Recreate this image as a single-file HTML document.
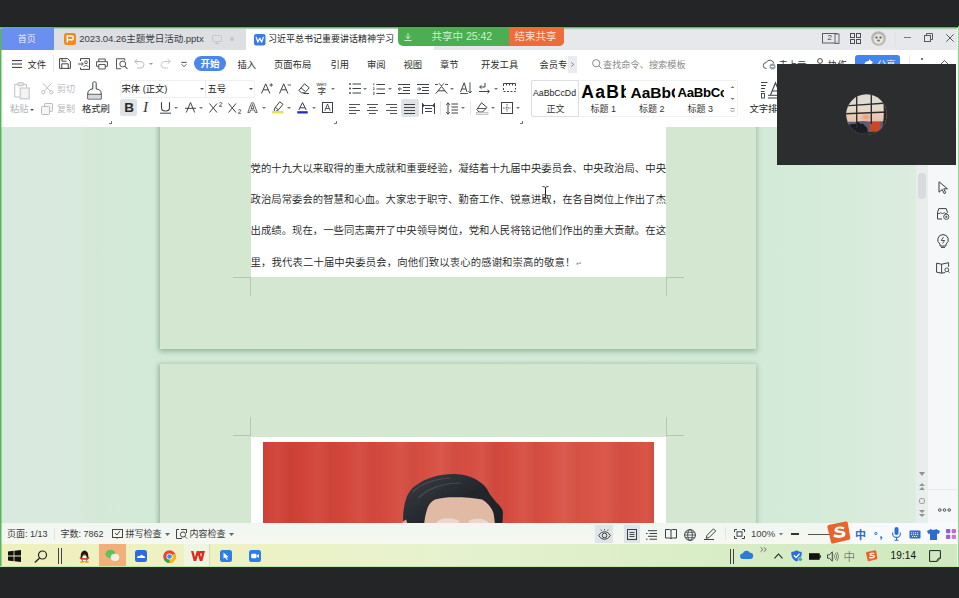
<!DOCTYPE html>
<html lang="zh-CN">
<head>
<meta charset="utf-8">
<title>WPS</title>
<style>
*{box-sizing:border-box;margin:0;padding:0}
html,body{width:959px;height:598px;overflow:hidden;background:#242527;}
body{position:relative;font-family:"Liberation Sans","Noto Sans CJK SC",sans-serif;font-size:9px;color:#333;-webkit-font-smoothing:antialiased;}
.abs{position:absolute}
.t{position:absolute;white-space:nowrap;line-height:1;}
svg{position:absolute;overflow:visible}
#win{position:absolute;left:0;top:25.500px;width:959px;height:541.500px;background:linear-gradient(180deg,#0e2c10 0,#0e2c10 1.300px,#7fa381 1.500px,#a9c9ad 3px,#58b45d 3.200px)}
#tabbar{position:absolute;left:1.500px;top:27.500px;width:956px;height:22.500px;background:linear-gradient(180deg,#9fc3a3 0,#d4e4d7 1.500px,#e6e8ec 2.500px);}
#menurow{position:absolute;left:2px;top:50px;width:955px;height:27px;background:#fff;}
#ribbon{position:absolute;left:2px;top:77px;width:955px;height:50px;background:#fff;}
#doc{position:absolute;left:2px;top:127px;width:955px;height:396px;background:linear-gradient(90deg,#d9e9df 0,#d8e9dd 78px,#d6e8d8 80px,#d3ead8 158px,#d2ead7 755px,#d6ebda 830px,#dcecdf 914px);overflow:hidden}
#status{position:absolute;left:2px;top:523px;width:955px;height:21px;background:linear-gradient(180deg,#f1f6f1 0,#f6f8f1 100%);font-size:9px;color:#3a3a3a}
#taskbar{position:absolute;left:2px;top:544px;width:955px;height:21.700px;background:linear-gradient(90deg,#eef0bd 0,#edf2c4 250px,#e6f2cf 450px,#d9edc6 700px,#cfe9c0 959px);}

#doc .page{position:absolute;background:#d4e7d0;box-shadow:0 2px 5px 1px rgba(80,120,90,.36),-2px 0 4px rgba(80,120,90,.18);}
#doc .line{position:absolute;left:248.5px;width:415.5px;height:12px;font-size:10.350px;line-height:12px;color:#222;font-weight:350;text-align:justify;text-align-last:justify;white-space:nowrap;letter-spacing:0}
.crop{position:absolute;background:#b4c4b6}
#side{position:absolute;left:928px;top:127px;width:29px;height:396px;background:#f5f7f9}
#vscroll{position:absolute;left:916px;top:165px;width:12px;height:358px;background:#e8eeeb}

#tabbar .t{font-size:9px;color:#333}
#menurow .t{font-size:9.300px;color:#2b2b2b;top:10.500px}
.dd{position:absolute;width:0;height:0;border-left:2px solid transparent;border-right:2px solid transparent;border-top:2.500px solid #777}
#share{position:absolute;left:398px;top:27px;width:165.500px;height:19px;border-radius:0 0 5px 5px;overflow:hidden;background:#4bae52}

#ribbon .t{font-size:9px;color:#2b2b2b}
#ribbon svg path,#ribbon svg rect,#ribbon svg circle{vector-effect:none}
.lnch{position:absolute;width:3px;height:3px;margin-top:1px;border-right:1px solid #777;border-bottom:1px solid #777}
.sep{position:absolute;width:1px;background:#e6e6e6}
</style>
</head>
<body>
<div id="win"></div>
<div id="tabbar">
 <div class="abs" style="left:0;top:.7px;width:52.500px;height:22px;background:#6b8ff0"></div>
 <span class="t" style="left:16.300px;top:7.500px;color:rgba(255,255,255,.9);font-size:9px">首页</span>
 <div class="abs" style="left:52.500px;top:1.500px;width:192px;height:21px;background:#dedfe3"></div>
 <svg style="left:62px;top:5.500px" width="12" height="12" viewBox="0 0 12 12"><rect width="12" height="12" rx="2.200" fill="#f08a24"/><path d="M3.300 9.500V3h4.200c2.300 0 2.300 3.800 0 3.800H4.200" fill="none" stroke="#fff" stroke-width="1.400"/></svg>
 <span class="t" style="left:77.800px;top:6.800px;font-size:9.600px;color:#3a3d45;letter-spacing:-.1px">2023.04.26主题党日活动.pptx</span>
 <svg style="left:210px;top:7px" width="10" height="9" viewBox="0 0 10 9"><rect x=".5" y=".5" width="9" height="6" rx=".8" fill="none" stroke="#c3c6cb" stroke-width="1"/><path d="M5 6.500v2M3 8.500h4" stroke="#c3c6cb"/></svg>
 <div class="abs" style="left:228.500px;top:9.500px;width:3.500px;height:3.500px;border-radius:2px;background:#c0c3c8"></div>
 <div class="abs" style="left:244.500px;top:1.500px;width:188px;height:21px;background:#fff"></div>
 <svg style="left:252px;top:6px" width="11.500" height="11.500" viewBox="0 0 12 12"><rect width="12" height="12" rx="2.200" fill="#3a7be8"/><path d="M2.300 3.500l1.700 5L6 4.500l2 4 1.700-5" fill="none" stroke="#fff" stroke-width="1.300" stroke-linejoin="round" stroke-linecap="round"/></svg>
 <span class="t" style="left:266.500px;top:7.700px;font-size:9px;color:#222">习近平总书记重要讲话精神学习</span>
 <svg style="left:820px;top:5px" width="18" height="11" viewBox="0 0 18 11"><rect x=".5" y=".5" width="14.500" height="9.500" fill="none" stroke="#5a5f66"/><rect x="13" y="1" width="4" height="9.500" fill="#e6e8ec" stroke="#5a5f66" stroke-width=".9"/><path d="M14.500 9h1" stroke="#5a5f66" stroke-width=".8"/></svg>
 <span class="t" style="left:826px;top:6.500px;font-size:8px;color:#444">2</span>
 <svg style="left:848.500px;top:5px" width="11" height="11" viewBox="0 0 11 11"><rect x=".5" y=".5" width="4" height="4" fill="none" stroke="#4a4f56"/><rect x="6.500" y=".5" width="4" height="4" fill="none" stroke="#4a4f56"/><rect x=".5" y="6.500" width="4" height="4" fill="none" stroke="#4a4f56"/><rect x="6.500" y="6.500" width="4" height="4" fill="none" stroke="#4a4f56"/></svg>
 <svg style="left:869.500px;top:3px" width="15" height="15" viewBox="0 0 15 15"><circle cx="7.500" cy="7.500" r="7.300" fill="#b9b6b0"/><circle cx="7.500" cy="8" r="5" fill="#e6e3dd"/><circle cx="5.500" cy="6.500" r="1.100" fill="#555"/><circle cx="9.500" cy="6.500" r="1.100" fill="#555"/><ellipse cx="7.500" cy="9.500" rx="1.500" ry="1" fill="#777"/></svg>
 <div class="abs" style="left:893px;top:4px;width:1px;height:15px;background:#dfe1e5"></div>
 <div class="abs" style="left:902px;top:9.500px;width:7px;height:1px;background:#777"></div>
 <svg style="left:922px;top:5.500px" width="9" height="9" viewBox="0 0 9 9"><path d="M2.500 2.500V.5h6v6h-2" fill="none" stroke="#5a5a5a" stroke-width="1"/><rect x=".5" y="2.500" width="6" height="6" fill="none" stroke="#5a5a5a"/></svg>
 <svg style="left:944px;top:6.500px" width="8" height="8" viewBox="0 0 8 8"><path d="M.3.300l7.400 7.400M7.700.3L.3 7.700" stroke="#5a5a5a" stroke-width="1"/></svg>
</div>
<div id="share">
 <div class="abs" style="left:110.500px;top:0;width:55px;height:19px;background:#ee6b3b"></div>
 <svg style="left:6px;top:6px" width="8" height="8" viewBox="0 0 8 8"><path d="M4 0v5.500M1.500 3.300L4 5.700l2.500-2.400M.3 7.500h7.400" fill="none" stroke="#d5f5d5" stroke-width=".9"/></svg>
 <span class="t" style="left:33.500px;top:4.300px;font-size:10.500px;color:#c9f3c9">共享中 25:42</span>
 <span class="t" style="left:116.500px;top:4.300px;font-size:10.500px;color:#fde3d6">结束共享</span>
</div>
<div id="menurow">
 <svg style="left:10px;top:9.500px" width="10" height="8" viewBox="0 0 10 8"><path d="M0 .6h10M0 4h10M0 7.400h10" stroke="#333" stroke-width="1"/></svg>
 <span class="t" style="left:25.500px">文件</span>
 <div class="abs" style="left:50.500px;top:5px;width:1px;height:17px;background:#e9e9e9"></div>
 <svg style="left:57px;top:8px" width="12" height="11" viewBox="0 0 12 11"><path d="M.6.600h8l2.800 2.800v7H.6zM2.800 10.400V5.800h6.400v4.600M3 .6v2.600h4.500" fill="none" stroke="#444" stroke-width="1"/></svg>
 <svg style="left:76px;top:7.500px" width="12" height="12" viewBox="0 0 12 12"><path d="M2.500 3V.6h9v10.800h-9V9.500" fill="none" stroke="#444" stroke-width="1"/><path d="M0 6h5M3.500 4.200L5.300 6 3.500 7.800" fill="none" stroke="#444" stroke-width=".9"/><circle cx="8" cy="4.300" r="1.400" fill="none" stroke="#444" stroke-width=".9"/><path d="M6 9c0-2 4-2 4 0" fill="none" stroke="#444" stroke-width=".9"/></svg>
 <svg style="left:94px;top:7.500px" width="12" height="12" viewBox="0 0 13 12"><path d="M3 3.500V.6h7v2.900M3 8.500H.6v-5h11.800v5H10M3 6.500h7v4.900H3z" fill="none" stroke="#444" stroke-width="1"/></svg>
 <svg style="left:113.700px;top:7.500px" width="12" height="11.500" viewBox="0 0 13 12"><path d="M9.500 2.500V.6H.6v10.800h5" fill="none" stroke="#444" stroke-width="1"/><circle cx="7.300" cy="6.300" r="3.200" fill="none" stroke="#444" stroke-width="1"/><path d="M9.600 8.700l2.800 2.800" stroke="#444" stroke-width="1.100"/></svg>
 <svg style="left:132px;top:8px" width="11" height="11" viewBox="0 0 11 11"><path d="M3.500.8L.8 3.500l2.700 2.700M1 3.500h5.500c4.500 0 4.500 6.500 0 6.500H3" fill="none" stroke="#b5b8bc" stroke-width="1"/></svg>
 <div class="dd" style="left:146.500px;top:12.500px;border-top-color:#999"></div>
 <svg style="left:158px;top:8px" width="11" height="11" viewBox="0 0 11 11"><path d="M7.500.8l2.700 2.700-2.700 2.700M10 3.500H4.500C0 3.500 0 10 4.500 10H8" fill="none" stroke="#c5c8cc" stroke-width="1"/></svg>
 <svg style="left:178.800px;top:11.500px" width="6" height="5.500" viewBox="0 0 7 7"><path d="M0 .5h7M.5 3l3 3 3-3" fill="none" stroke="#444" stroke-width="1.200"/></svg>
 <div class="abs" style="left:191.500px;top:6px;width:32.500px;height:15px;border-radius:7.500px;background:#4b87e8"></div>
 <span class="t" style="left:198.500px;top:9.300px;color:#fff;font-weight:bold;font-size:9.500px">开始</span>
 <span class="t" style="left:235.500px">插入</span>
 <span class="t" style="left:272px">页面布局</span>
 <span class="t" style="left:328.500px">引用</span>
 <span class="t" style="left:365px">审阅</span>
 <span class="t" style="left:401.500px">视图</span>
 <span class="t" style="left:438px">章节</span>
 <span class="t" style="left:479px">开发工具</span>
 <span class="t" style="left:537.500px">会员专</span>
 <div class="abs" style="left:566px;top:5.500px;width:9px;height:17px;background:#e9ebee"></div>
 <svg style="left:569px;top:11.500px" width="3.200" height="5" viewBox="0 0 4 6"><path d="M.5.500L3.300 3 .5 5.500" fill="none" stroke="#555" stroke-width=".9"/></svg>
 <svg style="left:589.500px;top:9px" width="10" height="10" viewBox="0 0 10 10"><circle cx="4.200" cy="4.200" r="3.600" fill="none" stroke="#888" stroke-width="1"/><path d="M6.800 6.800L9.600 9.600" stroke="#888" stroke-width="1"/></svg>
 <span class="t" style="left:601px;color:#8a8a8a;font-size:9.200px">查找命令、搜索模板</span>
 <svg style="left:761px;top:9px" width="13" height="11" viewBox="0 0 13 11"><path d="M3.500 9.500a3 3 0 0 1-.3-6A4 4 0 0 1 10.800 4.500" fill="none" stroke="#555" stroke-width="1"/><circle cx="9.500" cy="7.500" r="3" fill="#9aa0a8"/><path d="M8 7.500h3" stroke="#fff" stroke-width="1"/></svg>
 <span class="t" style="left:776.500px;color:#333">未上云</span>
 <svg style="left:814px;top:8px" width="9" height="11" viewBox="0 0 9 11"><circle cx="4" cy="3" r="2.400" fill="none" stroke="#444"/><path d="M.5 10.500c0-5 7-5 7 0" fill="none" stroke="#444"/></svg>
 <span class="t" style="left:826px;color:#333">协作</span>
 <div class="abs" style="left:853px;top:4.700px;width:45px;height:17px;border-radius:3px;background:#4285f0"></div>
 <svg style="left:862px;top:9px" width="9" height="8" viewBox="0 0 9 8"><path d="M5 0l4 3.500L5 7V5C2.500 5 1 6 0 8c0-4 2-6 5-6z" fill="#fff"/></svg>
 <span class="t" style="left:875px;color:#fff">分享</span>
 <div class="abs" style="left:907px;top:5px;width:1px;height:17px;background:#e9e9e9"></div>
 <div class="abs" style="left:918.500px;top:8px;width:2px;height:2px;border-radius:1px;background:#444"></div>
 <svg style="left:938px;top:10px" width="9" height="5" viewBox="0 0 9 5"><path d="M.5 4.500l4-4 4 4" fill="none" stroke="#555"/></svg>
</div>
<div id="ribbon">
 <svg style="left:11.500px;top:4.500px" width="16" height="17.500" viewBox="0 0 17 19"><path d="M4 2.500H.6v13.800H6M10 2.500h3.400V6" fill="none" stroke="#b9bcc0" stroke-width="1"/><rect x="4" y=".8" width="6" height="3.200" rx=".6" fill="#e9eaec" stroke="#b9bcc0"/><rect x="6.500" y="6.500" width="9.800" height="11.800" fill="#f2f3f4" stroke="#b9bcc0"/></svg>
 <span class="t" style="left:8px;top:28.300px;color:#b3b6ba;font-size:9.300px">粘贴</span>
 <div class="dd" style="left:27.500px;top:31.500px;border-top-color:#555"></div>
 <svg style="left:39px;top:5.500px" width="12.500" height="11.500" viewBox="0 0 13 12"><path d="M2 .3l7.500 8M11 .3l-7.500 8" stroke="#b9bcc0" stroke-width="1"/><circle cx="2.300" cy="9.700" r="1.700" fill="none" stroke="#b9bcc0"/><circle cx="10.700" cy="9.700" r="1.700" fill="none" stroke="#b9bcc0"/></svg>
 <span class="t" style="left:55px;top:8.200px;color:#b9bcc0">剪切</span>
 <svg style="left:39.200px;top:25.500px" width="12" height="12" viewBox="0 0 12 12"><rect x="3.500" y=".5" width="8" height="8" rx=".8" fill="#f4f5f6" stroke="#b9bcc0"/><rect x=".5" y="3.500" width="8" height="8" rx=".8" fill="#f4f5f6" stroke="#b9bcc0"/></svg>
 <span class="t" style="left:55px;top:28.300px;color:#b9bcc0">复制</span>
 <svg style="left:85px;top:4px" width="15" height="19" viewBox="0 0 15 19"><path d="M5.800 8V2.300c0-2.200 3.400-2.200 3.400 0V8M5.800 8C3 8 1.200 9.500.8 12v6h13.400v-6c-.4-2.500-2.200-4-5-4M.8 13.300h13.400" fill="none" stroke="#3d4248" stroke-width="1"/><rect x="1.300" y="13.800" width="12.400" height="3.700" fill="#d5d8dc"/></svg>
 <span class="t" style="left:80px;top:28.300px;font-size:9.300px;color:#222">格式刷</span>
 <div class="lnch" style="left:107px;top:42.500px"></div>
 <div class="abs" style="left:117.500px;top:2.500px;width:135.500px;height:18px;border:1px solid #eef0f2;border-radius:2px;background:#fff"></div>
 <div class="abs" style="left:203px;top:3.500px;width:1px;height:16px;background:#e9eaec"></div>
 <span class="t" style="left:119.500px;top:7.800px;font-size:9.300px;color:#222">宋体 (正文)</span>
 <div class="dd" style="left:197.500px;top:11px;border-top-color:#555"></div>
 <span class="t" style="left:205.500px;top:7.800px;font-size:9.300px;color:#222">五号</span>
 <div class="dd" style="left:247px;top:11px;border-top-color:#555"></div>
 <div class="abs" style="left:117.500px;top:21.500px;width:17.500px;height:17.500px;border-radius:2px;background:#e0e3e6"></div>
 <span class="t" style="left:122.200px;top:23.800px;font-size:13.500px;font-weight:bold;color:#2a2a2a;font-family:'Liberation Sans',sans-serif">B</span>
 <span class="t" style="left:141px;top:22.300px;font-size:15.500px;font-style:italic;color:#3a3a3a;font-family:'Liberation Serif',serif">I</span>
 <svg style="left:157.500px;top:25px" width="11" height="12" viewBox="0 0 11 12"><path d="M1.500.3v5.400c0 4.400 8 4.400 8 0V.3" fill="none" stroke="#3d4248" stroke-width="1.100"/><path d="M0 11.200h11" stroke="#3d4248" stroke-width="1"/></svg>
 <div class="dd" style="left:172px;top:30px"></div>
 <svg style="left:183px;top:25px" width="11" height="11" viewBox="0 0 11 11"><path d="M1.300 10.500L5.500.5l4.200 10" fill="none" stroke="#3d4248" stroke-width="1"/><path d="M0 6.300h11" stroke="#3d4248" stroke-width="1"/></svg>
 <div class="dd" style="left:197px;top:30px"></div>
 <svg style="left:207px;top:25px" width="14" height="11" viewBox="0 0 14 11"><path d="M.5 1.500l7.500 9M8 1.500l-7.500 9" stroke="#3d4248" stroke-width="1"/><path d="M10.300 1.300c.5-1.200 2.700-1 2.500.3-.1.900-1.500 1.500-2.600 2.700h2.900" fill="none" stroke="#3d4248" stroke-width=".8"/></svg>
 <svg style="left:225.500px;top:25px" width="14" height="12" viewBox="0 0 14 12"><path d="M.5 1.500l7.500 9M8 1.500l-7.500 9" stroke="#3d4248" stroke-width="1"/><path d="M10.300 8.300c.5-1.200 2.700-1 2.500.3-.1.900-1.500 1.500-2.600 2.700h2.900" fill="none" stroke="#3d4248" stroke-width=".8"/></svg>
 <svg style="left:244.500px;top:25px" width="11" height="11" viewBox="0 0 11 11"><path d="M.8 10.500L4.500.8h2l3.700 9.700H8.300L7.400 8H3.600l-.9 2.500zM4.100 6.500h2.800L5.500 2.500z" fill="none" stroke="#3d4248" stroke-width=".8"/></svg>
 <div class="dd" style="left:259.500px;top:30px"></div>
 <svg style="left:269.500px;top:24px" width="13" height="13" viewBox="0 0 13 13"><path d="M7.800.8l3.200 2.500-4.500 5.500-3.200-2.500zM3.300 6.300L2 9.200l1.500 1.200 3-1.600" fill="none" stroke="#3d4248" stroke-width="1" stroke-linejoin="round"/><rect x="0" y="10" width="11.500" height="2.500" fill="#e6e64a"/></svg>
 <div class="dd" style="left:284.500px;top:30px"></div>
 <svg style="left:295px;top:24.500px" width="11" height="12" viewBox="0 0 11 12"><path d="M1.800 8L5.500.5 9.200 8M3 5.800h5" fill="none" stroke="#3d4248" stroke-width="1"/><rect x=".3" y="9.200" width="10.400" height="2.300" fill="#2727c8"/></svg>
 <div class="dd" style="left:309.500px;top:30px"></div>
 <svg style="left:320px;top:25px" width="11" height="11" viewBox="0 0 11 11"><rect x=".5" y=".5" width="10" height="10" fill="none" stroke="#3d4248"/><path d="M2.800 8.800L5.500 2l2.700 6.800M3.700 6.500h3.600" fill="none" stroke="#3d4248" stroke-width=".9"/></svg>
 <div class="lnch" style="left:332px;top:42.500px"></div>
 <svg style="left:259px;top:5.500px" width="12" height="11" viewBox="0 0 12 11"><path d="M.5 10.500L4.700.8l4.200 9.700M2.200 6.800h5" fill="none" stroke="#3d4248" stroke-width="1"/><path d="M8.500 2h3.500M10.200.3v3.500" stroke="#3d4248" stroke-width=".9"/></svg>
 <svg style="left:277px;top:5.500px" width="12" height="11" viewBox="0 0 12 11"><path d="M.5 10.500L4.700.8l4.200 9.700M2.200 6.800h5" fill="none" stroke="#3d4248" stroke-width="1"/><path d="M8.700 2H12" stroke="#3d4248" stroke-width=".9"/></svg>
 <svg style="left:296px;top:5.500px" width="12" height="11" viewBox="0 0 12 11"><path d="M6.500.8l4.700 4-4.400 5H3.500L.8 7.500zM3 4.800l4.300 3.700M5.500 10.500H11" fill="none" stroke="#3d4248" stroke-width="1" stroke-linejoin="round"/></svg>
 <span class="t" style="left:315.500px;top:9.500px;font-size:8.500px;color:#333">字</span>
 <span class="t" style="left:314.500px;top:4.500px;font-size:5.500px;color:#333;letter-spacing:-.1px">wén</span>
 <div class="dd" style="left:329px;top:11px"></div>
 <svg style="left:346.500px;top:6px" width="12" height="11" viewBox="0 0 12 11"><path d="M3.500 1h8.500M3.500 5.500h8.500M3.500 10h8.500" stroke="#3d4248" stroke-width="1"/><circle cx="1" cy="1" r=".9" fill="#3d4248"/><circle cx="1" cy="5.500" r=".9" fill="#3d4248"/><circle cx="1" cy="10" r=".9" fill="#3d4248"/></svg>
 <div class="dd" style="left:361px;top:11px"></div>
 <svg style="left:371px;top:5.500px" width="12" height="12" viewBox="0 0 12 12"><path d="M3.500 1.500h8.500M3.500 6h8.500M3.500 10.500h8.500" stroke="#3d4248" stroke-width="1"/><path d="M.8 0v2.500M.2 4.800c.8-.6 1.500 0 .8.800l-.9 1h1.300M.2 9.200c1.500-.5 1.500 1 .4 1.100 1.200.1 1.100 1.700-.5 1.200" fill="none" stroke="#3d4248" stroke-width=".7"/></svg>
 <div class="dd" style="left:386px;top:11px"></div>
 <svg style="left:396px;top:6.500px" width="12" height="10" viewBox="0 0 12 10"><path d="M0 .5h12M5 3.500h7M5 6.500h7M0 9.500h12" stroke="#3d4248" stroke-width="1"/><path d="M3.800 5H.5M2 3.300L.3 5 2 6.700" fill="none" stroke="#3d4248" stroke-width=".9"/></svg>
 <svg style="left:414.500px;top:6.500px" width="12" height="10" viewBox="0 0 12 10"><path d="M0 .5h12M5 3.500h7M5 6.500h7M0 9.500h12" stroke="#3d4248" stroke-width="1"/><path d="M.2 5h3.300M2 3.300L3.700 5 2 6.700" fill="none" stroke="#3d4248" stroke-width=".9"/></svg>
 <svg style="left:432.500px;top:5.500px" width="13" height="11" viewBox="0 0 13 11"><path d="M.8 10.500L6.500 3.500l5.700 7M3 7.800h7" fill="none" stroke="#3d4248" stroke-width="1"/><path d="M4 .3L6.500 3 9 .3M0 1.500h3M10 1.500h3" fill="none" stroke="#3d4248" stroke-width=".9"/></svg>
 <div class="dd" style="left:448px;top:11px"></div>
 <svg style="left:458px;top:5px" width="12" height="12" viewBox="0 0 12 12"><path d="M.5 10L4.200.8 7 10M1.800 7h4" fill="none" stroke="#3d4248" stroke-width="1"/><path d="M0 11.500h8" stroke="#3d4248" stroke-width=".9"/><path d="M10 .3v10.500M8.300 9L10 11l1.700-2" fill="none" stroke="#3d4248" stroke-width=".9"/></svg>
 <svg style="left:477px;top:5.500px" width="11" height="11" viewBox="0 0 11 11"><path d="M6 0v4H.8M2.500 2.300L.6 4l1.900 1.700M0 8.500h10.200M8.500 6.800l1.900 1.700-1.900 1.700" fill="none" stroke="#3d4248" stroke-width="1"/></svg>
 <div class="dd" style="left:491.500px;top:11px"></div>
 <svg style="left:501px;top:6px" width="13" height="9" viewBox="0 0 13 9"><path d="M.5 3V.5h12V3M3.500.5v2M6.500.5v2M9.500.5v2" fill="none" stroke="#3d4248" stroke-width="1"/><path d="M.5 5v3.500h12V5" fill="none" stroke="#3d4248" stroke-width="1" stroke-dasharray="2 1.500"/></svg>
 <svg style="left:346.500px;top:26.500px" width="11" height="10" viewBox="0 0 11 10"><path d="M0 .5h11M0 3.500h7M0 6.500h11M0 9.500h7" stroke="#555" stroke-width="1"/></svg>
 <svg style="left:365px;top:26.500px" width="11" height="10" viewBox="0 0 11 10"><path d="M0 .5h11M2 3.500h7M0 6.500h11M2 9.500h7" stroke="#555" stroke-width="1"/></svg>
 <svg style="left:383.500px;top:26.500px" width="11" height="10" viewBox="0 0 11 10"><path d="M0 .5h11M4 3.500h7M0 6.500h11M4 9.500h7" stroke="#555" stroke-width="1"/></svg>
 <div class="abs" style="left:398.500px;top:22px;width:18px;height:18px;border-radius:2px;background:#dfe2e7"></div>
 <svg style="left:402px;top:26.500px" width="11" height="10" viewBox="0 0 11 10"><path d="M0 .5h11M0 3.500h11M0 6.500h11M0 9.500h11" stroke="#444" stroke-width="1.100"/></svg>
 <svg style="left:419.500px;top:25.500px" width="13" height="11" viewBox="0 0 13 11"><path d="M.5 0v11M12.500 0v11M.5 2.500h12M3 5.500h7M3 8.500h7" fill="none" stroke="#3d4248" stroke-width="1"/><path d="M2 1l-1.500 1.500L2 4M11 1l1.500 1.500L11 4" fill="none" stroke="#3d4248" stroke-width=".8"/></svg>
 <div class="sep" style="left:438px;top:24px;height:14px"></div>
 <svg style="left:443.500px;top:25px" width="12" height="13" viewBox="0 0 12 13"><path d="M2 1v11M.3 2.800L2 .8l1.700 2M.3 10.200L2 12.200l1.700-2" fill="none" stroke="#3d4248" stroke-width="1"/><path d="M5.500 2h6.500M5.500 5h6.500M5.500 8h6.500M5.500 11h6.500" stroke="#3d4248" stroke-width="1"/></svg>
 <div class="dd" style="left:458.500px;top:30px"></div>
 <div class="sep" style="left:468px;top:24px;height:14px"></div>
 <svg style="left:474px;top:24.500px" width="13" height="13" viewBox="0 0 13 13"><path d="M5.500.8L11 5.500 6.500 10H3L.8 7.500z" fill="none" stroke="#3d4248" stroke-width="1" stroke-linejoin="round"/><path d="M1 6.500h9" stroke="#3d4248" stroke-width=".9"/><rect x=".5" y="10.500" width="11.500" height="2" fill="#eceef0" stroke="#aaa" stroke-width=".6"/></svg>
 <div class="dd" style="left:489px;top:30px"></div>
 <svg style="left:499px;top:25px" width="12" height="12" viewBox="0 0 12 12"><rect x=".5" y=".5" width="11" height="11" fill="none" stroke="#3d4248"/><path d="M6 2v8M2 6h8" stroke="#3d4248" stroke-width=".9" stroke-dasharray="1.500 1"/></svg>
 <div class="dd" style="left:514px;top:30px"></div>
 <div class="lnch" style="left:517.500px;top:42.500px"></div>
 <div class="abs" style="left:529px;top:2.700px;width:206.500px;height:37.500px;border:1px solid #f0f1f3;border-radius:2px"></div>
 <div class="abs" style="left:529px;top:2.700px;width:47.500px;height:37.500px;border:1px solid #dcdfe2;border-radius:2px"></div>
 <span class="t" style="left:531px;top:11.500px;font-size:8.700px;color:#222;font-family:'Liberation Sans',sans-serif;letter-spacing:0">AaBbCcDd</span>
 <span class="t" style="left:544.500px;top:27.500px;font-size:9px;color:#333">正文</span>
 <div class="abs" style="left:578px;top:4px;width:46px;height:22px;overflow:hidden"><span class="t" style="left:1.300px;top:3.100px;font-size:17.500px;font-weight:bold;color:#000;font-family:'Liberation Sans',sans-serif;letter-spacing:1.300px">AaBb</span></div>
 <span class="t" style="left:588.500px;top:27.500px;font-size:9px;color:#333">标题 1</span>
 <div class="abs" style="left:626.500px;top:4px;width:46px;height:22px;overflow:hidden"><span class="t" style="left:2px;top:3.900px;font-size:15.500px;font-weight:bold;color:#000;font-family:'Liberation Sans',sans-serif">AaBbC</span></div>
 <span class="t" style="left:637px;top:27.500px;font-size:9px;color:#333">标题 2</span>
 <div class="abs" style="left:674.500px;top:4px;width:47.500px;height:22px;overflow:hidden"><span class="t" style="left:1px;top:5.400px;font-size:13.200px;font-weight:bold;color:#000;letter-spacing:-.3px;font-family:'Liberation Sans',sans-serif">AaBbCc</span></div>
 <span class="t" style="left:685.500px;top:27.500px;font-size:9px;color:#333">标题 3</span>
 <svg style="left:727.500px;top:8px" width="5" height="28" viewBox="0 0 5 28"><path d="M.5 3L2.500 1l2 2z M.5 13L2.500 15l2-2z" fill="#777"/><path d="M.5 23.500h4M.5 25l2 2 2-2" fill="none" stroke="#777" stroke-width=".8"/></svg>
 <svg style="left:759px;top:4.500px" width="16" height="17" viewBox="0 0 16 17"><path d="M0 .5h6.500M0 3.500h5M0 6.500h4M0 9.500h3.500" stroke="#3d4248" stroke-width="1"/><rect x=".5" y="11.500" width="3" height="4.500" fill="none" stroke="#3d4248" stroke-width=".9"/><path d="M9.500 13L14.500 .8 19.500 13M11.300 9h6.400" fill="none" stroke="#3d4248" stroke-width="1.100"/><path d="M7 13.300h12M7 16h12" stroke="#3d4248" stroke-width="1"/></svg>
 <span class="t" style="left:747.500px;top:27.500px;font-size:9.300px;color:#222">文字排版</span>
</div>
<div id="doc">
 <div class="page" style="left:158px;top:-40px;width:596px;height:262px"></div>
 <div class="page" style="left:158px;top:236.500px;width:596px;height:300px"></div>
 <div class="abs" style="left:248.5px;top:0;width:415.5px;height:150px;background:#fff"></div>
 <div class="line" style="top:36px">党的十九大以来取得的重大成就和重要经验，凝结着十九届中央委员会、中央政治局、中央</div>
 <div class="line" style="top:67.200px">政治局常委会的智慧和心血。大家忠于职守、勤奋工作、锐意进取，在各自岗位上作出了杰</div>
 <div class="line" style="top:98.400px">出成绩。现在，一些同志离开了中央领导岗位，党和人民将铭记他们作出的重大贡献。在这</div>
 <div class="line" style="top:129.600px;text-align-last:left;text-align:left;letter-spacing:.14px">里，我代表二十届中央委员会，向他们致以衷心的感谢和崇高的敬意！<span style="color:#888;font-size:7px">↵</span></div>
 <div class="crop" style="left:231px;top:150px;width:17.5px;height:1px"></div>
 <div class="crop" style="left:248px;top:150px;width:1px;height:18.5px"></div>
 <div class="crop" style="left:664px;top:150px;width:17.5px;height:1px"></div>
 <div class="crop" style="left:664px;top:150px;width:1px;height:18.5px"></div>
 <div class="crop" style="left:231px;top:308px;width:17.5px;height:1px"></div>
 <div class="crop" style="left:248px;top:290px;width:1px;height:18.5px"></div>
 <div class="crop" style="left:664px;top:308px;width:17.5px;height:1px"></div>
 <div class="crop" style="left:664px;top:290px;width:1px;height:18.5px"></div>
 <div class="abs" style="left:248.5px;top:310px;width:415.5px;height:100px;background:#fff"></div>
 <div class="abs" id="photo" style="left:260.500px;top:315px;width:391.500px;height:90px;background:repeating-linear-gradient(90deg,rgba(255,255,255,0) 0,rgba(255,255,255,.045) 14px,rgba(0,0,0,.025) 27px,rgba(255,255,255,0) 41px),linear-gradient(90deg,#cf4036 0,#d3463b 20%,#d85044 45%,#d54a3f 60%,#d95547 80%,#d64d41 100%);overflow:hidden">
  <svg style="left:0;top:0" width="392" height="90" viewBox="262.500 442 392 90"><defs><linearGradient id="hg" x1="0" y1="0" x2="1" y2="1"><stop offset="0" stop-color="#3a3e44"/><stop offset=".5" stop-color="#24272c"/><stop offset="1" stop-color="#1c1e22"/></linearGradient><filter id="bl" x="-10%" y="-10%" width="120%" height="120%"><feGaussianBlur stdDeviation=".7"/></filter></defs><g filter="url(#bl)"><path d="M403.500 534C402 520 402 508 406.600 496c3-6 6-9 9.400-11 5-4 10-6 15.600-7.800 7-2 15-3.200 21.900-3.200 6 0 12 1 17.200 3.200 5 2 9 4.500 12.500 7.800 3 3 4.500 6 6.300 9.400 2 2.500 4 5 6.200 7.800 3 3 5 5 6.300 7.800 1 4 0 9-.8 24z" fill="url(#hg)"/><path d="M423.500 534c-.5-8 .5-17 3.500-26 1.500-4 4-7 7.500-8.600 7-1.800 13-2.300 20.500-2.200 9 0 18 .6 26.700 2.200 5 3 9 7.500 10.900 12.600 1.500 5 2 14 2.400 22.400z" fill="#e0baa4"/><path d="M436 522c5-4.500 16-5 23-1l-2 6h-19zM468 521c6-3.500 15-3 20 1l-1 5h-18z" fill="#ecdcd2" opacity=".85"/><path d="M399.500 534c-.5-7 2-13 6-14.500 1.500 3 2 8 2 14.500z" fill="#d6ae96"/><path d="M412 492c8-8 22-13 38-14M418 498c8-9 24-15 42-15" fill="none" stroke="#5a6068" stroke-width="1.200" opacity=".55"/></g></svg>
 </div>
 <svg style="left:539.700px;top:58.500px" width="7" height="13" viewBox="0 0 7 13"><path d="M.5.600c1.500 0 2.500.3 3 1 .5-.7 1.500-1 3-1M.5 12.400c1.500 0 2.500-.3 3-1 .5.700 1.500 1 3 1M3.500 1.600v9.800" fill="none" stroke="#222" stroke-width="1"/></svg>
</div>
<div class="abs" style="left:1px;top:29px;width:1px;height:21px;background:#62a2a7"></div>
<div class="abs" style="left:1px;top:50px;width:1px;height:77px;background:#acdaae"></div>
<div class="abs" style="left:1px;top:127px;width:1px;height:396px;background:#98ce9e"></div>
<div class="abs" style="left:1px;top:523px;width:1px;height:21px;background:#a6d6a8"></div>
<div class="abs" style="left:1px;top:544px;width:1px;height:22px;background:#a3d28d"></div>
<div class="abs" style="left:956.500px;top:28px;width:1.200px;height:538px;background:#f2f7f2"></div>
<div class="abs" style="left:957.700px;top:26px;width:1.300px;height:541px;background:#93d296"></div>
<div class="abs" style="left:0;top:565.700px;width:959px;height:.9px;background:#bfe6ae"></div>
<div class="abs" style="left:0;top:566.500px;width:959px;height:1px;background:#17381a"></div>
<div id="vscroll">
 <div class="abs" style="left:2px;top:7.500px;width:7.500px;height:26.500px;border-radius:3.500px;background:#d7dbdf"></div>
 <svg style="left:3px;top:307px" width="6" height="4" viewBox="0 0 6 4"><path d="M0 0h6L3 4z" fill="#8d9399"/></svg>
 <svg style="left:3px;top:318px" width="6" height="7" viewBox="0 0 6 7"><path d="M0 3L3 0l3 3zM0 7l3-3 3 3z" fill="#8d9399"/></svg>
 <svg style="left:3px;top:332.500px" width="6" height="6" viewBox="0 0 6 6"><rect x=".6" y=".6" width="4.800" height="4.800" rx="1" fill="none" stroke="#8d9399" stroke-width=".9"/></svg>
 <svg style="left:3px;top:345px" width="6" height="7" viewBox="0 0 6 7"><path d="M0 0l3 3 3-3zM0 4l3 3 3-3z" fill="#8d9399"/></svg>
</div>
<div id="side">
 <svg style="left:9.500px;top:54px" width="11" height="13" viewBox="0 0 11 13"><path d="M1 .8l8.500 7H5.800l2 4-1.600.8-2-4.100L1 11.200z" fill="none" stroke="#3a3f45" stroke-width="1" stroke-linejoin="round"/></svg>
 <svg style="left:8px;top:81px" width="14" height="12" viewBox="0 0 14 12"><path d="M1.500 4.500L2.800.6h7.400l1.300 3.900M1.500 4.500v6.500H6M1.500 4.500c.8 1.500 2.500 1.500 3.300 0 .8 1.500 2.600 1.500 3.400 0 .8 1.500 2.500 1.500 3.300 0" fill="none" stroke="#3a3f45" stroke-width="1"/><circle cx="10.300" cy="8.800" r="2.600" fill="none" stroke="#3a3f45" stroke-width=".9"/><path d="M9.200 8.800h2.200M10.300 7.700v2.200" stroke="#3a3f45" stroke-width=".8"/></svg>
 <svg style="left:9px;top:107px" width="12" height="14" viewBox="0 0 12 14"><path d="M6 .6a5.200 5.200 0 0 1 3 9.500V12H3v-1.900A5.200 5.200 0 0 1 6 .6zM4 13.400h4" fill="none" stroke="#3a3f45" stroke-width="1"/><path d="M6.500 3L4.200 6.500h3.400L5.500 9.500" fill="none" stroke="#3a3f45" stroke-width=".9"/></svg>
 <svg style="left:8px;top:135px" width="14" height="12" viewBox="0 0 14 12"><path d="M.6 1.200l5 1v9l-5-1zM5.600 2.200l7-1.500v4M5.600 11.200l3.500-.7" fill="none" stroke="#3a3f45" stroke-width="1" stroke-linejoin="round"/><circle cx="10.800" cy="7.800" r="1.900" fill="none" stroke="#3a3f45" stroke-width=".9"/><path d="M12.200 9.300l1.300 1.400" stroke="#3a3f45" stroke-width=".9"/></svg>
 <div class="abs" style="left:0;top:362px;width:29px;height:1px;background:#e6e9ec"></div>
 <svg style="left:9.500px;top:380.500px" width="13" height="4" viewBox="0 0 13 4"><circle cx="1.800" cy="2" r="1.300" fill="none" stroke="#3a3f45" stroke-width=".9"/><circle cx="6.500" cy="2" r="1.300" fill="none" stroke="#3a3f45" stroke-width=".9"/><circle cx="11.200" cy="2" r="1.300" fill="none" stroke="#3a3f45" stroke-width=".9"/></svg>
</div>
<div id="status">
 <span class="t" style="left:5px;top:6.5px">页面: 1/13</span>
 <div class="abs" style="left:52px;top:5px;width:1px;height:12px;background:#dfe3df"></div>
 <span class="t" style="left:58.5px;top:6.5px">字数: 7862</span>
 <svg style="left:110px;top:6px" width="11" height="10" viewBox="0 0 11 10"><rect x=".5" y=".5" width="10" height="8" fill="none" stroke="#444" stroke-width="1"/><path d="M3 4l2 2 3-4" fill="none" stroke="#444" stroke-width="1"/><path d="M5 8.5v1.2" stroke="#444"/></svg>
 <span class="t" style="left:123.5px;top:6.5px">拼写检查</span>
 <svg style="left:162.5px;top:10px" width="5" height="3" viewBox="0 0 5 3"><path d="M0 0h5L2.5 3z" fill="#666"/></svg>
 <svg style="left:174px;top:6px" width="12" height="10" viewBox="0 0 12 10"><path d="M3 .5H.5v9H6M5 .5h5.5V4" fill="none" stroke="#444"/><circle cx="7" cy="5.5" r="2.6" fill="none" stroke="#444"/><path d="M9 7.5l2 2" stroke="#444"/></svg>
 <span class="t" style="left:187.5px;top:6.5px">内容检查</span>
 <svg style="left:226.5px;top:10px" width="5" height="3" viewBox="0 0 5 3"><path d="M0 0h5L2.5 3z" fill="#666"/></svg>
 <div class="abs" style="left:592.5px;top:2px;width:18.5px;height:18px;background:#dfe4e6"></div>
 <svg style="left:595.5px;top:5.500px" width="13" height="11" viewBox="0 0 13 11"><path d="M.7 6.500C2.500 3.500 4.500 2.800 6.500 2.800S10.500 3.500 12.300 6.500C10.500 9.500 8.500 10.200 6.500 10.200S2.500 9.500.7 6.500z" fill="none" stroke="#3a3f45" stroke-width="1"/><circle cx="6.500" cy="6.500" r="2.300" fill="none" stroke="#3a3f45"/><path d="M3.500 1.800L2.800.5M6.500 1.300V0M9.500 1.800l.7-1.300" stroke="#3a3f45" stroke-width=".8"/></svg>
 <div class="abs" style="left:621.5px;top:2px;width:16px;height:18px;background:#dfe4e6"></div>
 <svg style="left:625px;top:6px" width="10" height="11" viewBox="0 0 10 11"><rect x=".5" y=".5" width="9" height="10" fill="none" stroke="#3a3f45"/><path d="M2.500 3.500h5M2.500 5.500h5M2.500 7.500h5" stroke="#3a3f45" stroke-width=".9"/></svg>
 <svg style="left:644px;top:6.500px" width="11" height="10" viewBox="0 0 11 10"><path d="M2 .7h9M0 3.500h1.500M3.500 3.500H11M2 6.300h9M0 9.200h1.500M3.500 9.200H11" stroke="#3a3f45" stroke-width="1"/></svg>
 <svg style="left:663px;top:6px" width="12" height="11" viewBox="0 0 12 11"><path d="M.5.500h4.200c.8 0 1.300.5 1.300 1.200 0-.7.500-1.200 1.300-1.200h4.200v8.500H7.300c-.8 0-1.300.400-1.300 1 0-.6-.5-1-1.300-1H.5zM6 1.700V10" fill="none" stroke="#3a3f45" stroke-width="1"/></svg>
 <svg style="left:682px;top:5.500px" width="12" height="12" viewBox="0 0 12 12"><circle cx="6" cy="6" r="5.400" fill="none" stroke="#3a3f45"/><ellipse cx="6" cy="6" rx="2.300" ry="5.400" fill="none" stroke="#3a3f45" stroke-width=".9"/><path d="M.6 6h10.800M1.300 3.300h9.400M1.300 8.700h9.400" stroke="#3a3f45" stroke-width=".8" fill="none"/></svg>
 <svg style="left:702px;top:5px" width="13" height="12" viewBox="0 0 13 12"><path d="M9.500.8l2.200 2.200-6.500 6.500-3 .8.800-3z" fill="none" stroke="#3a3f45" stroke-width="1"/><path d="M0 11.500h10" stroke="#3a3f45" stroke-width="1"/></svg>
 <div class="abs" style="left:722.5px;top:4px;width:1px;height:13px;background:#e2e6e2"></div>
 <svg style="left:731.5px;top:6px" width="11" height="10" viewBox="0 0 11 10"><path d="M.5 3V.5H3M8 .5h2.500V3M10.500 7v2.500H8M3 9.500H.5V7" fill="none" stroke="#3a3f45"/><rect x="3" y="2.800" width="5" height="4.400" fill="none" stroke="#3a3f45"/></svg>
 <span class="t" style="left:749px;top:6.200px;font-size:9.500px;color:#444">100%</span>
 <svg style="left:776.500px;top:10px" width="4" height="2.500" viewBox="0 0 5 3"><path d="M0 0h5L2.500 3z" fill="#777"/></svg>
 <div class="abs" style="left:789px;top:10.300px;width:8px;height:1.600px;background:#333"></div>
 <div class="abs" style="left:806px;top:10.800px;width:24px;height:1px;background:#555"></div>
 <div class="abs" style="left:846px;top:0;width:109px;height:21px;background:#f7f9fb"></div>
 <svg style="left:824px;top:-2px" width="25" height="24" viewBox="0 0 25 24"><path d="M3.500 3.800L19.800.6c1-.2 1.800.3 2 1.300l2.500 14.800c.2 1-.4 1.800-1.300 2L7 22.600c-1 .2-1.800-.3-2-1.300L1.300 6C1.100 5 2.500 4 3.500 3.800z" fill="#e9642d"/><path d="M18.500 6.200c-4-1.500-9.500-1-10 2.200-.5 3 3 3.300 5.800 3.600 2.600.3 2.400 1.700.2 2-2.200.3-4.700-.2-6.300-1l-.8 2.800c3 1.300 7.500 1.500 10 .3 2.800-1.300 2.800-5-.3-6-2.300-.8-5.700-.5-5.600-1.700.1-1.200 3.700-1.100 6.100-.1z" fill="#fff"/></svg>
 <span class="t" style="left:853px;top:6.500px;font-size:11px;font-weight:bold;color:#2a6cd4">中</span>
 <svg style="left:872px;top:7.500px" width="10" height="10" viewBox="0 0 10 10"><circle cx="1.800" cy="2.500" r="1.100" fill="none" stroke="#2a6cd4" stroke-width="1"/><path d="M7 5.200c1.300 0 1.600 1.400.9 2.500-.5.800-1.200 1.200-1.800 1.300.6-.6.900-1.100.8-1.700-.9-.1-1.100-2.100.1-2.100z" fill="#2a6cd4"/></svg>
 <svg style="left:890px;top:4px" width="9" height="14" viewBox="0 0 9 14"><rect x="2.500" y="0" width="4" height="8" rx="2" fill="#2a6cd4"/><path d="M.6 5.500v1a3.900 3.900 0 0 0 7.800 0v-1M4.500 10.500V13M2.500 13.300h4" fill="none" stroke="#2a6cd4" stroke-width="1.100"/></svg>
 <svg style="left:907px;top:7px" width="12" height="9" viewBox="0 0 12 9"><rect x=".5" y=".5" width="11" height="8" rx="1" fill="#2a6cd4"/><path d="M2 2.800h8M2 4.600h8M3 6.500h6" stroke="#fff" stroke-width=".9" stroke-dasharray="1.200 .8"/></svg>
 <svg style="left:924.500px;top:6px" width="13" height="11" viewBox="0 0 13 11"><path d="M4 0c.8 1.200 4.200 1.200 5 0l4 2-1.300 3-1.700-.6V11H3V4.400L1.300 5 0 2z" fill="#2a6cd4"/></svg>
 <svg style="left:943.500px;top:5.500px" width="10" height="10" viewBox="0 0 10 10"><rect width="4.300" height="4.300" rx="1" fill="#8b5fd0"/><rect x="5.700" width="4.300" height="4.300" rx="1" fill="#c06ad0"/><rect y="5.700" width="4.300" height="4.300" rx="1" fill="#9a62d4"/><rect x="5.700" y="5.700" width="4.300" height="4.300" rx="1" fill="#c47cc8"/></svg>
</div>
<div id="taskbar">
 <svg style="left:5.5px;top:6px" width="13" height="12" viewBox="0 0 13 12"><path d="M0 1.6L5.6.8v4.8H0zM6.4.7L13 0v5.6H6.4zM0 6.4h5.6v4.8L0 10.4zM6.4 6.4H13V12l-6.6-.7z" fill="#111"/></svg>
 <svg style="left:32px;top:6px" width="14" height="13" viewBox="0 0 14 13"><circle cx="8.500" cy="5" r="4" fill="none" stroke="#222" stroke-width="1.200"/><path d="M5.600 8L.8 12.400" stroke="#222" stroke-width="1.300"/></svg>
 <div class="abs" style="left:56px;top:4px;width:1px;height:16px;background:#444"></div>
 <div class="abs" style="left:58.5px;top:4px;width:1px;height:16px;background:#444"></div>
 <svg style="left:76.500px;top:5.500px" width="11" height="13" viewBox="0 0 11 13"><ellipse cx="5.500" cy="6" rx="3.800" ry="5.600" fill="#1a1a1a"/><ellipse cx="5.500" cy="8.200" rx="2.300" ry="3" fill="#fff"/><path d="M1 6.500c2 2.200 7 2.200 9 0l.3 2c-2.500 1.700-7 1.700-9.600 0z" fill="#e0342a"/><ellipse cx="5.500" cy="5.300" rx="1.800" ry=".7" fill="#f5a623"/><ellipse cx="3" cy="12" rx="2" ry=".9" fill="#f5a623"/><ellipse cx="8" cy="12" rx="2" ry=".9" fill="#f5a623"/></svg>
 <div class="abs" style="left:96.500px;top:0;width:27.500px;height:22px;background:#f1b07a"></div>
 <svg style="left:103px;top:5px" width="15" height="13" viewBox="0 0 15 13"><ellipse cx="5.500" cy="5" rx="5" ry="4.300" fill="#5cc35c"/><ellipse cx="10" cy="8.300" rx="4.300" ry="3.600" fill="#ecf3e6"/></svg>
 <svg style="left:132.500px;top:6px" width="12" height="12" viewBox="0 0 12 12"><rect width="12" height="12" rx="2.500" fill="#2b6de0"/><path d="M2 8c.5-2.500 2-3 3-1.500C5.500 4.500 7 4 8 6c1-.7 2 .3 2.200 2z" fill="#fff"/></svg>
 <svg style="left:160.500px;top:5.500px" width="13" height="13" viewBox="0 0 13 13"><circle cx="6.500" cy="6.500" r="6.300" fill="#e8453c"/><path d="M6.500 6.500L1 9.700A6.300 6.300 0 0 0 6.500 12.800L9.700 7z" fill="#2da94f"/><path d="M6.500 6.500L12 3.400A6.300 6.300 0 0 1 6.500 12.800z" fill="#fbbc05"/><circle cx="6.500" cy="6.500" r="3" fill="#fff"/><circle cx="6.500" cy="6.500" r="2.300" fill="#4285f4"/></svg>
 <div class="abs" style="left:181.500px;top:0;width:25.500px;height:22px;background:#f0f5e2"></div>
 <div class="abs" style="left:207px;top:0;width:1px;height:22px;background:#d5dcc0"></div>
 <svg style="left:188.500px;top:7px" width="14" height="10" viewBox="0 0 14 10"><path d="M0 0h2.400l1.600 6L5.800 0h2.400L10 6l1-3.500H8.600V0H14L11.300 10H8.800L7 4 5.200 10H2.700z" fill="#e02a1d"/></svg>
 <svg style="left:218px;top:6px" width="12" height="12" viewBox="0 0 12 12"><rect width="12" height="12" rx="2.500" fill="#2f7de6"/><path d="M3.500 2.500l5 4.500-2 .5 1.500 2.500-1.500-.5-1.500-2-1.500 1z" fill="#fff"/></svg>
 <svg style="left:246.500px;top:6px" width="12" height="12" viewBox="0 0 12 12"><rect width="12" height="12" rx="2.500" fill="#2d7cf0"/><rect x="2.200" y="3.800" width="5.300" height="4.400" rx="1" fill="#fff"/><path d="M7.800 5.500L10 4v4L7.800 6.500z" fill="#fff"/></svg>
 <div class="abs" style="left:728px;top:4.500px;width:1px;height:15px;background:#444"></div>
 <div class="abs" style="left:730.500px;top:4.500px;width:1px;height:15px;background:#444"></div>
 <svg style="left:738px;top:5.500px" width="13" height="9" viewBox="0 0 13 9"><path d="M3 9a2.800 2.800 0 0 1-.3-5.600A4 4 0 0 1 10 2.800 3.100 3.100 0 0 1 10.200 9z" fill="#2a7bd6"/></svg>
 <svg style="left:758px;top:3px" width="7" height="5" viewBox="0 0 7 5"><path d="M.5.300L3 2.500.5 4.700M3.800.3L6.300 2.500 3.800 4.700" fill="none" stroke="#555" stroke-width=".8"/></svg>
 <svg style="left:772px;top:9px" width="9" height="6" viewBox="0 0 9 6"><path d="M.5 5.300l4-4.300 4 4.300" fill="none" stroke="#222" stroke-width="1.100"/></svg>
 <svg style="left:789px;top:6px" width="12" height="12" viewBox="0 0 12 12"><path d="M5.500.3C7 1.500 9 2 10.700 2c.2 4-1 7.600-5.200 9.500C1.300 9.600.1 6 .3 2 2 2 4 1.500 5.500.3z" fill="#2a6edb"/><path d="M2.800 5.300l2.200 2.200 3.500-3.700" fill="none" stroke="#fff" stroke-width="1.300"/><circle cx="9.300" cy="9.300" r="2.100" fill="#35b0a0" stroke="#e8f2d0" stroke-width=".6"/></svg>
 <svg style="left:806.500px;top:8.500px" width="12" height="7" viewBox="0 0 13 7"><rect x=".5" y=".5" width="10.600" height="6" fill="#111" stroke="#111"/><rect x="11.500" y="2" width="1.200" height="3" fill="#111"/></svg>
 <svg style="left:825px;top:6.500px" width="11" height="11" viewBox="0 0 11 11"><path d="M.5 3.800h2L5.300.8v9.400L2.500 7.200h-2z" fill="none" stroke="#333" stroke-width=".9"/><path d="M6.800 3.500c.9 1 .9 3 0 4M8.300 2c1.600 2 1.600 5 0 7M9.800 1c2 3 2 6.500 0 9" fill="none" stroke="#555" stroke-width=".7"/></svg>
 <span class="t" style="left:841.500px;top:7.500px;font-size:11.500px;color:#555;font-weight:300;font-family:'Liberation Sans','Noto Sans CJK SC',sans-serif">中</span>
 <svg style="left:863px;top:6px" width="13" height="12" viewBox="0 0 25 24"><path d="M3.500 3.800L19.800.6c1-.2 1.800.3 2 1.300l2.500 14.800c.2 1-.4 1.800-1.300 2L7 22.600c-1 .2-1.800-.3-2-1.300L1.300 6C1.100 5 2.500 4 3.500 3.800z" fill="#e9642d"/><path d="M18.500 6.200c-4-1.500-9.500-1-10 2.200-.5 3 3 3.300 5.800 3.600 2.600.3 2.400 1.700.2 2-2.200.3-4.700-.2-6.300-1l-.8 2.800c3 1.300 7.500 1.500 10 .3 2.800-1.300 2.800-5-.3-6-2.300-.8-5.700-.5-5.600-1.700.1-1.200 3.700-1.100 6.100-.1z" fill="#fff"/></svg>
 <span class="t" style="left:888.500px;top:6.500px;font-size:10px;color:#111;letter-spacing:.15px">19:14</span>
 <svg style="left:927px;top:6px" width="12" height="12" viewBox="0 0 12 12"><path d="M.6.600h10.800v7.500l-3.300 3.300H.6z" fill="none" stroke="#222" stroke-width="1"/><path d="M11.400 8.100c-2-.4-3.600.9-3.300 3.300" fill="none" stroke="#222" stroke-width=".9"/></svg>
</div>
<div id="overlay" class="abs" style="left:776.500px;top:63.600px;width:179.700px;height:101.100px;background:#2b2d2e">
 <svg style="left:69.500px;top:30.200px" width="41" height="41" viewBox="0 0 41 41">
  <defs><clipPath id="avc"><circle cx="20.500" cy="20.500" r="20.300"/></clipPath>
  <linearGradient id="sky" x1="0" y1="0" x2="0" y2="1"><stop offset="0" stop-color="#d9dad6"/><stop offset=".35" stop-color="#e6dccb"/><stop offset=".62" stop-color="#e9c4ae"/><stop offset=".75" stop-color="#cfc6cf"/><stop offset="1" stop-color="#8f97a8"/></linearGradient>
  <radialGradient id="sun" cx=".5" cy=".5" r=".5"><stop offset="0" stop-color="#f0906a"/><stop offset="1" stop-color="#f0a888" stop-opacity="0"/></radialGradient></defs>
  <g clip-path="url(#avc)">
   <rect width="41" height="41" fill="url(#sky)"/>
   <ellipse cx="20" cy="23" rx="7" ry="4.500" fill="url(#sun)"/>
   <path d="M0 28c4-1 8 .5 12-.5s8-.5 12 0 8 0 17-.5V41H0z" fill="#5a5f72"/>
   <path d="M3 31c3-2 5 0 7-1.500 2-2 3-3 4 .5 2-1.500 4 0 5 2 2 1 3 3 3 9H3z" fill="#1b1c26"/>
   <rect x="23.500" y="27.500" width="11" height="12" rx="2.500" fill="#c8482a"/>
   <path d="M10.700 0v34M25.300 0v30" stroke="#2e2c2c" stroke-width="1.400"/>
   <path d="M0 11.900L41 9M0 19.700L41 18" stroke="#2e2c2c" stroke-width="1.400"/>
   <path d="M35.500 0c3 8 3.500 28-1 41h7V0z" fill="#2a2829"/>
   <path d="M8 41c5-3 20-4 30-3v3z" fill="#2b2d2e"/>
  </g>
 </svg>
</div>
</body>
</html>
